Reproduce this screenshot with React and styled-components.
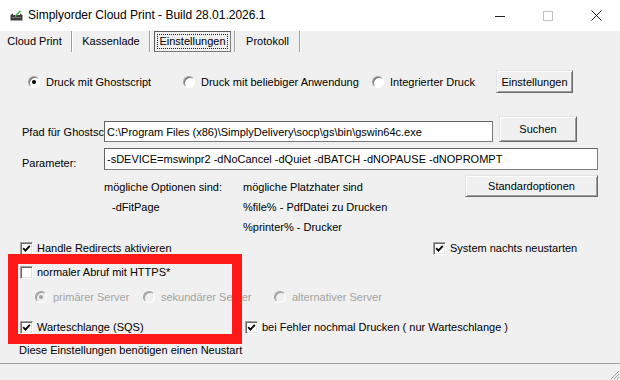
import React from "react";
import styled, { createGlobalStyle } from "styled-components";

const Global = createGlobalStyle`
  html, body { margin: 0; padding: 0; background: #f0f0f0; }
  body {
    width: 620px; height: 380px; overflow: hidden;
    font-family: "Liberation Sans", Arial, sans-serif;
    font-size: 11px; color: #000;
  }
  * { box-sizing: border-box; }
`;

const Window = styled.div`
  position: relative;
  width: 620px;
  height: 380px;
  display: flex;
  flex-direction: column;
  background: #f0f0f0;
`;

const TitleBar = styled.div`
  height: 31px;
  flex-shrink: 0;
  background: #fff;
  display: flex;
  align-items: center;
`;

const AppIcon = styled.svg`
  margin-left: 10px;
  width: 13px;
  height: 11px;
  flex-shrink: 0;
`;

const Title = styled.div`
  margin-left: 5px;
  flex: 1;
  font-size: 12px;
  color: #000;
  padding-bottom: 1px;
`;

const Controls = styled.div`
  display: flex;
  align-self: stretch;
`;

const Ctrl = styled.div`
  width: 48px;
  display: flex;
  align-items: center;
  justify-content: center;
`;

const TabStrip = styled.div`
  height: 21px;
  flex-shrink: 0;
  display: flex;
  align-items: stretch;
  padding-left: 1px;
`;

const Tab = styled.div`
  width: ${(p) => p.$w}px;
  display: flex;
  align-items: center;
  justify-content: center;
  white-space: nowrap;
  border: 1px solid ${(p) => (p.$active ? "#7a7a7a" : "transparent")};
  border-top-color: ${(p) => (p.$active ? "#5a5a5a" : "transparent")};
  border-left-color: ${(p) => (p.$active ? "#5a5a5a" : "transparent")};
`;

const TabText = styled.span`
  padding: 0 1px;
  outline: ${(p) => (p.$focus ? "1px dotted #222" : "none")};
  outline-offset: 0;
  line-height: 13px;
`;

const TabSep = styled.div`
  width: 2px;
  margin: 0 3px;
  border-left: 1px solid #a0a0a0;
  border-right: 1px solid #fff;
`;

const Panel = styled.div`
  flex: 1;
  display: flex;
  flex-direction: column;
`;

const OptionRow = styled.div`
  display: grid;
  grid-template-columns: 155px 189px 124px auto;
  align-items: center;
  padding-left: 28px;
  margin-top: 18px;
  height: 23px;
`;

const Option = styled.label`
  display: flex;
  align-items: center;
  gap: ${(p) => p.$gap ?? 6}px;
  white-space: nowrap;
  color: ${(p) => (p.$disabled ? "#a3a3a3" : "#000")};
`;

const RadioCircle = styled.span`
  width: 12px;
  height: 12px;
  flex-shrink: 0;
  border-radius: 50%;
  background: ${(p) => (p.$disabled ? "#f0f0f0" : "#fff")};
  border: 1px solid;
  border-color: #a0a0a0 #fff #fff #a0a0a0;
  box-shadow: inset 1px 1px ${(p) => (p.$disabled ? "#a0a0a0" : "#696969")};
  display: flex;
  align-items: center;
  justify-content: center;
  &::after {
    content: "";
    width: 4px;
    height: 4px;
    border-radius: 50%;
    background: ${(p) => (p.$disabled ? "#a0a0a0" : "#000")};
    display: ${(p) => (p.$checked ? "block" : "none")};
  }
`;

const CheckBox = styled.span`
  width: 13px;
  height: 13px;
  flex-shrink: 0;
  background: #fff;
  border: 1px solid;
  border-color: #a0a0a0 #fff #fff #a0a0a0;
  box-shadow: inset 1px 1px #696969, inset -1px -1px #e3e3e3;
  display: flex;
  align-items: center;
  justify-content: center;
`;

const Button = styled.div`
  width: ${(p) => p.$w}px;
  height: ${(p) => p.$h}px;
  margin-left: ${(p) => p.$ml || 0}px;
  flex-shrink: 0;
  display: flex;
  align-items: center;
  justify-content: center;
  background: #f0f0f0;
  border: 1px solid;
  border-color: #e3e3e3 #696969 #696969 #e3e3e3;
  box-shadow: inset 1px 1px #fff, inset -1px -1px #a0a0a0;
  white-space: nowrap;
`;

const FieldRow = styled.div`
  display: flex;
  align-items: flex-end;
  padding-left: 22px;
  margin-top: ${(p) => p.$mt}px;
`;

const FieldLabel = styled.div`
  width: 82px;
  overflow: hidden;
  white-space: nowrap;
  line-height: 14px;
  padding-bottom: ${(p) => p.$pb}px;
`;

const TextBox = styled.div`
  width: ${(p) => p.$w}px;
  height: ${(p) => p.$h}px;
  flex-shrink: 0;
  background: #fff;
  border: 1px solid #7a7a7a;
  border-top-color: #646464;
  border-left-color: #646464;
  padding: 0 2px;
  display: flex;
  align-items: center;
  white-space: nowrap;
  overflow: hidden;
`;

const HintGrid = styled.div`
  display: grid;
  grid-template-columns: 139px 222px 133px;
  padding-left: 104px;
  margin-top: 5px;
  align-items: start;
`;

const HintCol = styled.div`
  padding-top: 2px;
  line-height: 20px;
  white-space: nowrap;
`;

const HintLine = styled.div`
  padding-left: ${(p) => p.$indent || 0}px;
`;

const CheckRow = styled.div`
  display: grid;
  grid-template-columns: ${(p) => p.$cols};
  align-items: center;
  height: 16px;
  padding-left: ${(p) => p.$pl}px;
  margin-top: ${(p) => p.$mt}px;
`;

const Notice = styled.div`
  padding-left: 19px;
  margin-top: 8px;
  line-height: 14px;
`;

const StatusBar = styled.div`
  margin-top: auto;
  height: 17px;
  flex-shrink: 0;
  border-top: 1px solid #a0a0a0;
  display: flex;
  justify-content: flex-end;
  align-items: flex-end;
`;

const Annotation = styled.div`
  position: absolute;
  left: 8px;
  top: 254px;
  width: 234px;
  height: 90px;
  border: 10px solid #ff1a1a;
  pointer-events: none;
`;

const Check = () => (
  <svg width="9" height="9" viewBox="0 0 9 9">
    <polyline points="1.2,4.2 3.4,6.6 7.8,1.8" fill="none" stroke="#000" strokeWidth="1.8" />
  </svg>
);

const CheckOption = ({ checked, children }) => (
  <Option $gap={4}>
    <CheckBox>{checked && <Check />}</CheckBox>
    <span>{children}</span>
  </Option>
);

const RadioOption = ({ checked, disabled, children }) => (
  <Option $disabled={disabled}>
    <RadioCircle $checked={checked} $disabled={disabled} />
    <span>{children}</span>
  </Option>
);

export default function App() {
  return (
    <>
      <Global />
      <Window>
        <TitleBar>
          <AppIcon viewBox="0 0 13 11">
            <path d="M0.5 5 L3 3.5 L3 5 L10 5 L10 3.5 L12.5 5 L12.5 10.5 L0.5 10.5 Z" fill="#3d3d3d" />
            <path d="M5 6.5 L10.5 0.8" stroke="#4caf50" strokeWidth="1.6" />
            <rect x="2" y="7" width="9" height="1" fill="#777" />
          </AppIcon>
          <Title>Simplyorder Cloud Print - Build 28.01.2026.1</Title>
          <Controls>
            <Ctrl>
              <svg width="10" height="10" viewBox="0 0 10 10">
                <rect x="0" y="5" width="10" height="1" fill="#222" />
              </svg>
            </Ctrl>
            <Ctrl>
              <svg width="10" height="10" viewBox="0 0 10 10">
                <rect x="0.5" y="0.5" width="9" height="9" fill="none" stroke="#c4c4c4" />
              </svg>
            </Ctrl>
            <Ctrl>
              <svg width="11" height="11" viewBox="0 0 11 11">
                <path d="M0.5 0.5 L10.5 10.5 M10.5 0.5 L0.5 10.5" stroke="#222" strokeWidth="1" />
              </svg>
            </Ctrl>
          </Controls>
        </TitleBar>

        <TabStrip>
          <Tab $w={67}><TabText>Cloud Print</TabText></Tab>
          <TabSep />
          <Tab $w={70}><TabText>Kassenlade</TabText></Tab>
          <TabSep />
          <Tab $w={77} $active><TabText $focus>Einstellungen</TabText></Tab>
          <TabSep />
          <Tab $w={57}><TabText>Protokoll</TabText></Tab>
          <TabSep />
        </TabStrip>

        <Panel>
          <OptionRow>
            <RadioOption checked>Druck mit Ghostscript</RadioOption>
            <RadioOption>Druck mit beliebiger Anwendung</RadioOption>
            <RadioOption>Integrierter Druck</RadioOption>
            <Button $w={77} $h={23}>Einstellungen</Button>
          </OptionRow>

          <FieldRow $mt={23}>
            <FieldLabel $pb={3}>Pfad für Ghostsc</FieldLabel>
            <TextBox $w={389} $h={21}>
              C:\Program Files (x86)\SimplyDelivery\socp\gs\bin\gswin64c.exe
            </TextBox>
            <Button $w={78} $h={26} $ml={6}>Suchen</Button>
          </FieldRow>

          <FieldRow $mt={6}>
            <FieldLabel $pb={0}>Parameter:</FieldLabel>
            <TextBox $w={494} $h={22}>
              -sDEVICE=mswinpr2 -dNoCancel -dQuiet -dBATCH -dNOPAUSE -dNOPROMPT
            </TextBox>
          </FieldRow>

          <HintGrid>
            <HintCol>
              <HintLine>mögliche Optionen sind:</HintLine>
              <HintLine $indent={8}>-dFitPage</HintLine>
            </HintCol>
            <HintCol>
              <HintLine>mögliche Platzhater sind</HintLine>
              <HintLine>%file% - PdfDatei zu Drucken</HintLine>
              <HintLine>%printer% - Drucker</HintLine>
            </HintCol>
            <Button $w={133} $h={22}>Standardoptionen</Button>
          </HintGrid>

          <CheckRow $cols="413px auto" $pl={20} $mt={3}>
            <CheckOption checked>Handle Redirects aktivieren</CheckOption>
            <CheckOption checked>System nachts neustarten</CheckOption>
          </CheckRow>

          <CheckRow $cols="auto" $pl={20} $mt={8}>
            <CheckOption>normaler Abruf mit HTTPS*</CheckOption>
          </CheckRow>

          <CheckRow $cols="108px 131px auto" $pl={35} $mt={9}>
            <RadioOption checked disabled>primärer Server</RadioOption>
            <RadioOption disabled>sekundärer Server</RadioOption>
            <RadioOption disabled>alternativer Server</RadioOption>
          </CheckRow>

          <CheckRow $cols="225px auto" $pl={20} $mt={14}>
            <CheckOption checked>Warteschlange (SQS)</CheckOption>
            <CheckOption checked>bei Fehler nochmal Drucken ( nur Warteschlange )</CheckOption>
          </CheckRow>

          <Notice>Diese Einstellungen benötigen einen Neustart</Notice>

          <StatusBar>
            <svg width="12" height="12" viewBox="0 0 12 12">
              <path d="M11 3 L3 11 M11 6 L6 11 M11 9 L9 11" stroke="#a0a0a0" strokeWidth="1" />
            </svg>
          </StatusBar>
        </Panel>

        <Annotation />
      </Window>
    </>
  );
}
